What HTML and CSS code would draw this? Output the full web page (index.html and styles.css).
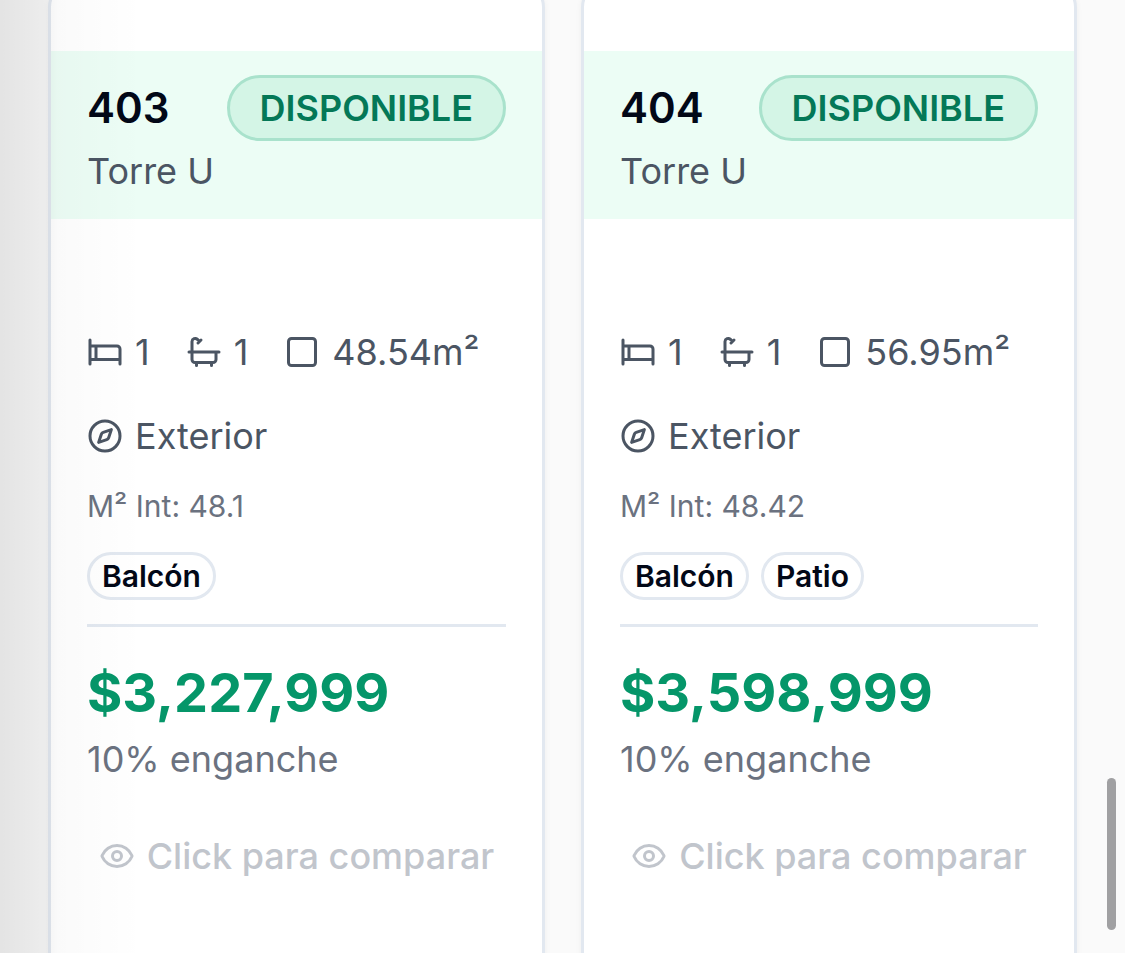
FILE: index.html
```html
<!DOCTYPE html>
<html lang="es">
<head>
    <meta charset="UTF-8">
    <meta name="viewport" content="width=device-width, initial-scale=1.0">
    <title>Unidades</title>
    <link rel="stylesheet" href="styles.css">
</head>
<body>
    <svg class="sprite">
        <symbol id="bed" viewBox="0 0 24 24"><path d="M2 4v16M2 8h18a2 2 0 0 1 2 2v10M2 17h20M6 8v9"/></symbol>
        <symbol id="bath" viewBox="0 0 24 24"><path d="M10 4 8 6M17 19v2M2 12h20M7 19v2M9 5 7.621 3.621A2.121 2.121 0 0 0 4 5v12a2 2 0 0 0 2 2h12a2 2 0 0 0 2-2v-5"/></symbol>
        <symbol id="square" viewBox="0 0 24 24"><rect x="3" y="3" width="18" height="18" rx="2"/></symbol>
        <symbol id="compass" viewBox="0 0 24 24"><path d="m16.24 7.76-1.804 5.411a2 2 0 0 1-1.265 1.265L7.76 16.24l1.804-5.411a2 2 0 0 1 1.265-1.265z"/><circle cx="12" cy="12" r="10"/></symbol>
        <symbol id="eye" viewBox="0 0 24 24"><path d="M2.062 12.348a1 1 0 0 1 0-.696 10.75 10.75 0 0 1 19.876 0 1 1 0 0 1 0 .696 10.75 10.75 0 0 1-19.876 0"/><circle cx="12" cy="12" r="3"/></symbol>
    </svg>
    <main class="units">
        <article class="card">
            <header class="card-header">
                <div class="title-row">
                    <h3 class="number">403</h3>
                    <span class="status">DISPONIBLE</span>
                </div>
                <p class="tower">Torre U</p>
            </header>
            <div class="card-body">
                <div class="specs">
                    <span class="spec"><svg class="icon"><use href="#bed"/></svg><span>1</span></span>
                    <span class="spec"><svg class="icon"><use href="#bath"/></svg><span>1</span></span>
                    <span class="spec"><svg class="icon"><use href="#square"/></svg><span class="area">48.54m²</span></span>
                </div>
                <div class="spec view"><svg class="icon"><use href="#compass"/></svg><span>Exterior</span></div>
                <p class="interior">M² Int: 48.1</p>
                <div class="tags">
                    <span class="tag">Balcón</span>
                </div>
                <div class="pricing">
                    <p class="price">$3,227,999</p>
                    <p class="deposit">10% enganche</p>
                </div>
                <div class="compare"><svg class="icon"><use href="#eye"/></svg><span>Click para comparar</span></div>
            </div>
        </article>
        <article class="card">
            <header class="card-header">
                <div class="title-row">
                    <h3 class="number">404</h3>
                    <span class="status">DISPONIBLE</span>
                </div>
                <p class="tower">Torre U</p>
            </header>
            <div class="card-body">
                <div class="specs">
                    <span class="spec"><svg class="icon"><use href="#bed"/></svg><span>1</span></span>
                    <span class="spec"><svg class="icon"><use href="#bath"/></svg><span>1</span></span>
                    <span class="spec"><svg class="icon"><use href="#square"/></svg><span class="area">56.95m²</span></span>
                </div>
                <div class="spec view"><svg class="icon"><use href="#compass"/></svg><span>Exterior</span></div>
                <p class="interior">M² Int: 48.42</p>
                <div class="tags">
                    <span class="tag">Balcón</span>
                    <span class="tag">Patio</span>
                </div>
                <div class="pricing">
                    <p class="price">$3,598,999</p>
                    <p class="deposit">10% enganche</p>
                </div>
                <div class="compare"><svg class="icon"><use href="#eye"/></svg><span>Click para comparar</span></div>
            </div>
        </article>
    </main>
    <div class="edge-shade"></div>
    <div class="scroll-thumb"></div>
</body>
</html>
```
FILE: styles.css
```css
* {
    box-sizing: border-box;
}
body {
    margin: 0;
    height: 953px;
    overflow: hidden;
    background: #fafafa;
    color: #020817;
    font-family: 'Inter', sans-serif;
    font-size: 36px;
    line-height: 48px;
}
h3, p {
    margin: 0;
}
.sprite {
    display: none;
}
.icon {
    width: 36px;
    height: 36px;
    flex: none;
    fill: none;
    stroke: currentColor;
    stroke-width: 2;
    stroke-linecap: round;
    stroke-linejoin: round;
}
.units {
    display: grid;
    grid-template-columns: 497px 496px;
    gap: 36px;
    margin: -17px 0 0 48px;
    height: 1010px;
}
.card {
    background: #fff;
    border: 3px solid #e2e8f0;
    border-radius: 24px;
    padding-top: 65px;
    box-shadow: 0 3px 6px rgba(0, 0, 0, 0.05);
}
.card-header {
    height: 168px;
    padding: 24px 36px;
    background: #ecfdf5;
}
.title-row {
    display: flex;
    justify-content: space-between;
    align-items: center;
    margin-bottom: 6px;
}
.number {
    font-size: 42px;
    font-weight: 600;
}
.status {
    height: 66px;
    padding: 6px 30px;
    border: 3px solid #a9e2cc;
    border-radius: 33px;
    background: #d4f5e6;
    color: #047857;
    font-weight: 600;
}
.tower, .spec {
    color: #4b5563;
}
.card-body {
    padding: 109px 36px 0;
}
.specs {
    display: flex;
    gap: 36px;
    margin-bottom: 36px;
}
.spec {
    display: flex;
    align-items: center;
    gap: 12px;
}
.interior {
    margin: 22px 0;
    font-size: 30px;
    color: #6b7280;
}
.tags {
    display: flex;
    gap: 12px;
}
.tag {
    height: 48px;
    padding: 0 12px;
    border: 3px solid #e2e8f0;
    border-radius: 24px;
    font-size: 30px;
    line-height: 42px;
    font-weight: 600;
}
.pricing {
    margin: 24px 0 49px;
    padding-top: 24px;
    border-top: 3px solid #e2e8f0;
}
.price {
    font-size: 54px;
    line-height: 84px;
    font-weight: 700;
    color: #059669;
}
.deposit {
    color: #6b7280;
}
.compare {
    display: flex;
    justify-content: center;
    align-items: center;
    gap: 12px;
    color: #c1c5cc;
    font-weight: 500;
}
/* soft shade along the left screen edge */
.edge-shade {
    position: absolute;
    inset: 0 auto 0 0;
    width: 144px;
    background: linear-gradient(90deg, rgba(0, 0, 0, 0.09), rgba(0, 0, 0, 0.055) 30%, rgba(0, 0, 0, 0.02) 40%, transparent);
}
.scroll-thumb {
    position: absolute;
    top: 778px;
    left: 1107px;
    width: 9px;
    height: 152px;
    border-radius: 5px;
    background: #a0a0a2;
}
```
